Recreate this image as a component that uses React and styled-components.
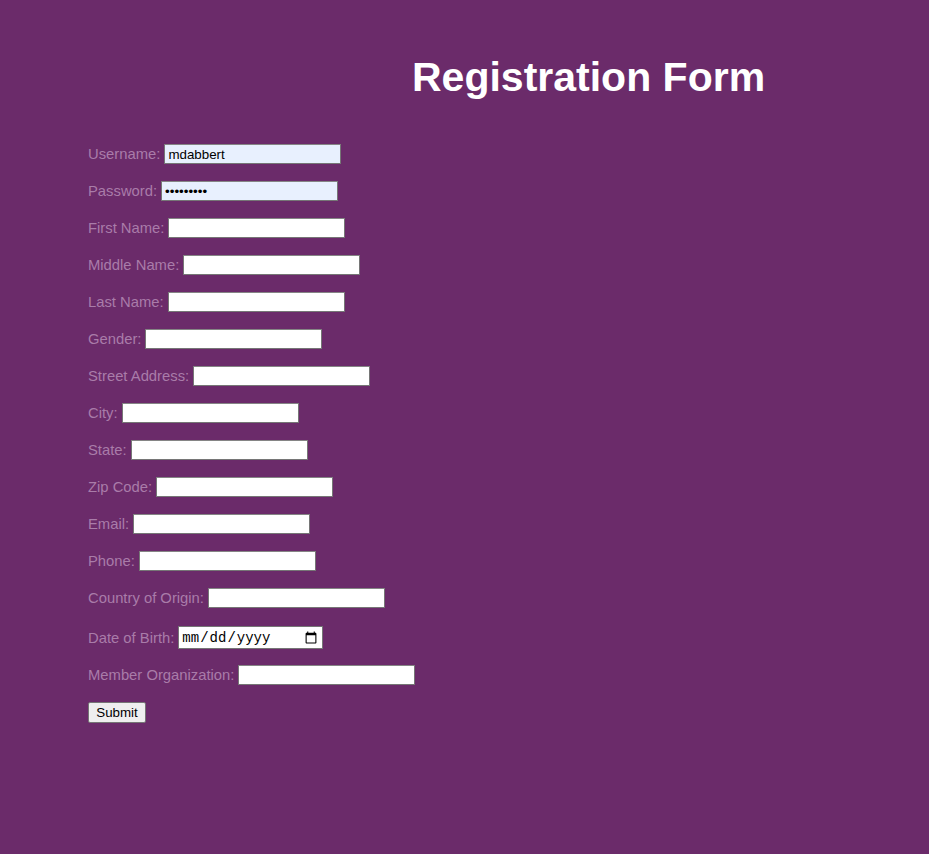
import React from "react";
import styled, { createGlobalStyle } from "styled-components";

const Global = createGlobalStyle`
  html, body { margin: 0; padding: 0; background: #ffffff; }
  body { font-family: "Liberation Sans", Arial, sans-serif; }
`;

const Page = styled.div`
  background: #6b2b6a;
  height: 854px;
  width: 929px;
  box-sizing: border-box;
  padding-top: 54px;
`;

const Title = styled.h1`
  margin: 0 0 44px 412px;
  font-family: "Liberation Sans", Arial, sans-serif;
  font-size: 41px;
  font-weight: bold;
  line-height: 46px;
  color: #ffffff;
`;

const Form = styled.form`
  display: flex;
  flex-direction: column;
  align-items: flex-start;
  padding-left: 88px;
`;

const Row = styled.div`
  display: flex;
  align-items: center;
  gap: 4px;
  height: ${(p) => (p.$tall ? "23px" : "20px")};
  margin-bottom: ${(p) => (p.$tall ? "16px" : "17px")};
  margin-top: ${(p) => (p.$tall ? "1px" : "0")};
`;

const Label = styled.label`
  font-size: 14.8px;
  color: #a97ca9;
  white-space: nowrap;
`;

const Input = styled.input`
  box-sizing: border-box;
  width: 177px;
  height: 20px;
  margin: 0;
  padding: 1px 3px;
  border: 1px solid #767676;
  border-top-color: #858585;
  background: ${(p) => (p.$filled ? "#e8f0fe" : "#ffffff")};
  font-family: "Liberation Sans", Arial, sans-serif;
  font-size: 13.33px;
  color: #000;
  outline: none;
`;

const DateInput = styled.input`
  box-sizing: border-box;
  width: 145px;
  height: 23px;
  margin: 0;
  padding: 1px 2px;
  border: 1px solid #767676;
  background: #ffffff;
  font-family: "Liberation Mono", monospace;
  font-size: 14px;
  color: #000;
`;

const Button = styled.button`
  box-sizing: border-box;
  width: 58px;
  height: 21px;
  margin: 0;
  padding: 0 6px;
  border: 1px solid #767676;
  border-radius: 2px;
  background: #efefef;
  font-family: "Liberation Sans", Arial, sans-serif;
  font-size: 13.33px;
  color: #000;
`;

const fields = [
  ["Username:", "text", "mdabbert", true],
  ["Password:", "password", "mdabbert1", true],
  ["First Name:"],
  ["Middle Name:"],
  ["Last Name:"],
  ["Gender:"],
  ["Street Address:"],
  ["City:"],
  ["State:"],
  ["Zip Code:"],
  ["Email:"],
  ["Phone:"],
  ["Country of Origin:"],
];

export default function App() {
  return (
    <>
      <Global />
      <Page>
        <Title>Registration Form</Title>
        <Form onSubmit={(e) => e.preventDefault()}>
          {fields.map(([label, type = "text", value = "", filled = false]) => (
            <Row key={label}>
              <Label>{label}</Label>
              <Input type={type} defaultValue={value} $filled={filled} />
            </Row>
          ))}
          <Row $tall>
            <Label>Date of Birth:</Label>
            <DateInput type="date" />
          </Row>
          <Row>
            <Label>Member Organization:</Label>
            <Input type="text" />
          </Row>
          <Button type="submit">Submit</Button>
        </Form>
      </Page>
    </>
  );
}
